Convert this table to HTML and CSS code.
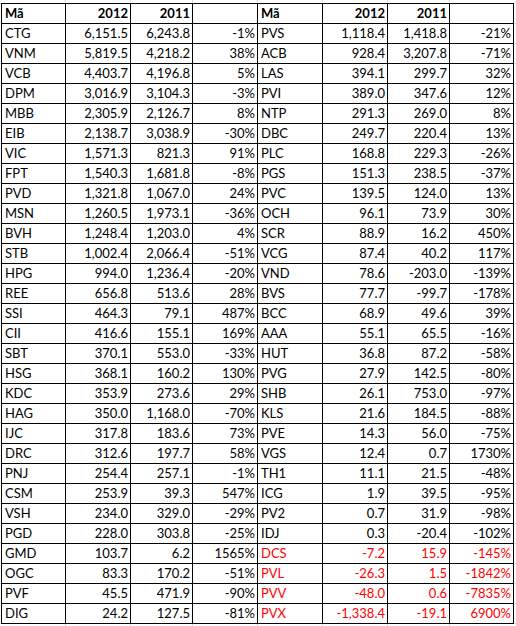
FILE: index.html
```html
<!DOCTYPE html>
<html lang="vi">
  <head>
    <meta charset="UTF-8" />
    <meta name="viewport" content="width=device-width, initial-scale=1.0" />
    <title>Lợi nhuận 2012 - 2011</title>
    <link rel="stylesheet" href="styles.css">
  </head>
  <body>
    <div class="sheet">
      <table class="profit">
        <colgroup>
          <col class="c-code" />
          <col class="c-num" />
          <col class="c-narrow" />
          <col class="c-num" />
          <col class="c-num" />
          <col class="c-num" />
          <col class="c-narrow" />
          <col class="c-code" />
        </colgroup>
        <thead>
          <tr>
            <th class="code">Mã</th><th>2012</th><th>2011</th><th></th>
            <th class="code">Mã</th><th>2012</th><th>2011</th><th></th>
          </tr>
        </thead>
        <tbody>
          <tr><td class="code">CTG</td><td>6,151.5</td><td>6,243.8</td><td>-1%</td><td class="code">PVS</td><td>1,118.4</td><td>1,418.8</td><td>-21%</td></tr>
          <tr><td class="code">VNM</td><td>5,819.5</td><td>4,218.2</td><td>38%</td><td class="code">ACB</td><td>928.4</td><td>3,207.8</td><td>-71%</td></tr>
          <tr><td class="code">VCB</td><td>4,403.7</td><td>4,196.8</td><td>5%</td><td class="code">LAS</td><td>394.1</td><td>299.7</td><td>32%</td></tr>
          <tr><td class="code">DPM</td><td>3,016.9</td><td>3,104.3</td><td>-3%</td><td class="code">PVI</td><td>389.0</td><td>347.6</td><td>12%</td></tr>
          <tr><td class="code">MBB</td><td>2,305.9</td><td>2,126.7</td><td>8%</td><td class="code">NTP</td><td>291.3</td><td>269.0</td><td>8%</td></tr>
          <tr><td class="code">EIB</td><td>2,138.7</td><td>3,038.9</td><td>-30%</td><td class="code">DBC</td><td>249.7</td><td>220.4</td><td>13%</td></tr>
          <tr><td class="code">VIC</td><td>1,571.3</td><td>821.3</td><td>91%</td><td class="code">PLC</td><td>168.8</td><td>229.3</td><td>-26%</td></tr>
          <tr><td class="code">FPT</td><td>1,540.3</td><td>1,681.8</td><td>-8%</td><td class="code">PGS</td><td>151.3</td><td>238.5</td><td>-37%</td></tr>
          <tr><td class="code">PVD</td><td>1,321.8</td><td>1,067.0</td><td>24%</td><td class="code">PVC</td><td>139.5</td><td>124.0</td><td>13%</td></tr>
          <tr><td class="code">MSN</td><td>1,260.5</td><td>1,973.1</td><td>-36%</td><td class="code">OCH</td><td>96.1</td><td>73.9</td><td>30%</td></tr>
          <tr><td class="code">BVH</td><td>1,248.4</td><td>1,203.0</td><td>4%</td><td class="code">SCR</td><td>88.9</td><td>16.2</td><td>450%</td></tr>
          <tr><td class="code">STB</td><td>1,002.4</td><td>2,066.4</td><td>-51%</td><td class="code">VCG</td><td>87.4</td><td>40.2</td><td>117%</td></tr>
          <tr><td class="code">HPG</td><td>994.0</td><td>1,236.4</td><td>-20%</td><td class="code">VND</td><td>78.6</td><td>-203.0</td><td>-139%</td></tr>
          <tr><td class="code">REE</td><td>656.8</td><td>513.6</td><td>28%</td><td class="code">BVS</td><td>77.7</td><td>-99.7</td><td>-178%</td></tr>
          <tr><td class="code">SSI</td><td>464.3</td><td>79.1</td><td>487%</td><td class="code">BCC</td><td>68.9</td><td>49.6</td><td>39%</td></tr>
          <tr><td class="code">CII</td><td>416.6</td><td>155.1</td><td>169%</td><td class="code">AAA</td><td>55.1</td><td>65.5</td><td>-16%</td></tr>
          <tr><td class="code">SBT</td><td>370.1</td><td>553.0</td><td>-33%</td><td class="code">HUT</td><td>36.8</td><td>87.2</td><td>-58%</td></tr>
          <tr><td class="code">HSG</td><td>368.1</td><td>160.2</td><td>130%</td><td class="code">PVG</td><td>27.9</td><td>142.5</td><td>-80%</td></tr>
          <tr><td class="code">KDC</td><td>353.9</td><td>273.6</td><td>29%</td><td class="code">SHB</td><td>26.1</td><td>753.0</td><td>-97%</td></tr>
          <tr><td class="code">HAG</td><td>350.0</td><td>1,168.0</td><td>-70%</td><td class="code">KLS</td><td>21.6</td><td>184.5</td><td>-88%</td></tr>
          <tr><td class="code">IJC</td><td>317.8</td><td>183.6</td><td>73%</td><td class="code">PVE</td><td>14.3</td><td>56.0</td><td>-75%</td></tr>
          <tr><td class="code">DRC</td><td>312.6</td><td>197.7</td><td>58%</td><td class="code">VGS</td><td>12.4</td><td>0.7</td><td>1730%</td></tr>
          <tr><td class="code">PNJ</td><td>254.4</td><td>257.1</td><td>-1%</td><td class="code">TH1</td><td>11.1</td><td>21.5</td><td>-48%</td></tr>
          <tr><td class="code">CSM</td><td>253.9</td><td>39.3</td><td>547%</td><td class="code">ICG</td><td>1.9</td><td>39.5</td><td>-95%</td></tr>
          <tr><td class="code">VSH</td><td>234.0</td><td>329.0</td><td>-29%</td><td class="code">PV2</td><td>0.7</td><td>31.9</td><td>-98%</td></tr>
          <tr><td class="code">PGD</td><td>228.0</td><td>303.8</td><td>-25%</td><td class="code">IDJ</td><td>0.3</td><td>-20.4</td><td>-102%</td></tr>
          <tr><td class="code">GMD</td><td>103.7</td><td>6.2</td><td>1565%</td><td class="code loss">DCS</td><td class="loss">-7.2</td><td class="loss">15.9</td><td class="loss">-145%</td></tr>
          <tr><td class="code">OGC</td><td>83.3</td><td>170.2</td><td>-51%</td><td class="code loss">PVL</td><td class="loss">-26.3</td><td class="loss">1.5</td><td class="loss">-1842%</td></tr>
          <tr><td class="code">PVF</td><td>45.5</td><td>471.9</td><td>-90%</td><td class="code loss">PVV</td><td class="loss">-48.0</td><td class="loss">0.6</td><td class="loss">-7835%</td></tr>
          <tr><td class="code">DIG</td><td>24.2</td><td>127.5</td><td>-81%</td><td class="code loss">PVX</td><td class="loss">-1,338.4</td><td class="loss">-19.1</td><td class="loss">6900%</td></tr>
        </tbody>
      </table>
    </div>
  </body>
</html>
```

FILE: styles.css
```css
body {
  margin: 0;
  font-family: Lato, "Open Sans", sans-serif;
  color: #000;
  background-color: white;
  /* faint spreadsheet gridlines around the bordered range */
  background-image:
    repeating-linear-gradient(to bottom, #d9d9d9 0 1px, transparent 1px 20px),
    linear-gradient(to right,
      transparent 65px, #d9d9d9 65px 66px, transparent 66px 130px,
      #d9d9d9 130px 131px, transparent 131px 192px, #d9d9d9 192px 193px,
      transparent 193px 257px, #d9d9d9 257px 258px, transparent 258px 322px,
      #d9d9d9 322px 323px, transparent 323px 387px, #d9d9d9 387px 388px,
      transparent 388px 449px, #d9d9d9 449px 450px, transparent 450px);
  background-position: 0 3px, 0 0;
}

.sheet {
  padding: 3px 0 0 1px;
}

.profit {
  border-collapse: collapse;
  table-layout: fixed;
  width: 513px;
  background-color: white;
  font-size: 13px;
}

.c-code {
  width: 64px;
}

.c-num {
  width: 65px;
}

.c-narrow {
  width: 62px;
}

.profit th,
.profit td {
  border: 1px solid #000;
  height: 19px;
  padding: 0 2px 0 2px;
  line-height: 19px;
  text-align: right;
  white-space: nowrap;
  overflow: hidden;
}

.profit th {
  font-weight: bold;
}

.profit .code {
  text-align: left;
  padding-left: 3px;
}

.loss {
  color: #ff0000;
}
```
